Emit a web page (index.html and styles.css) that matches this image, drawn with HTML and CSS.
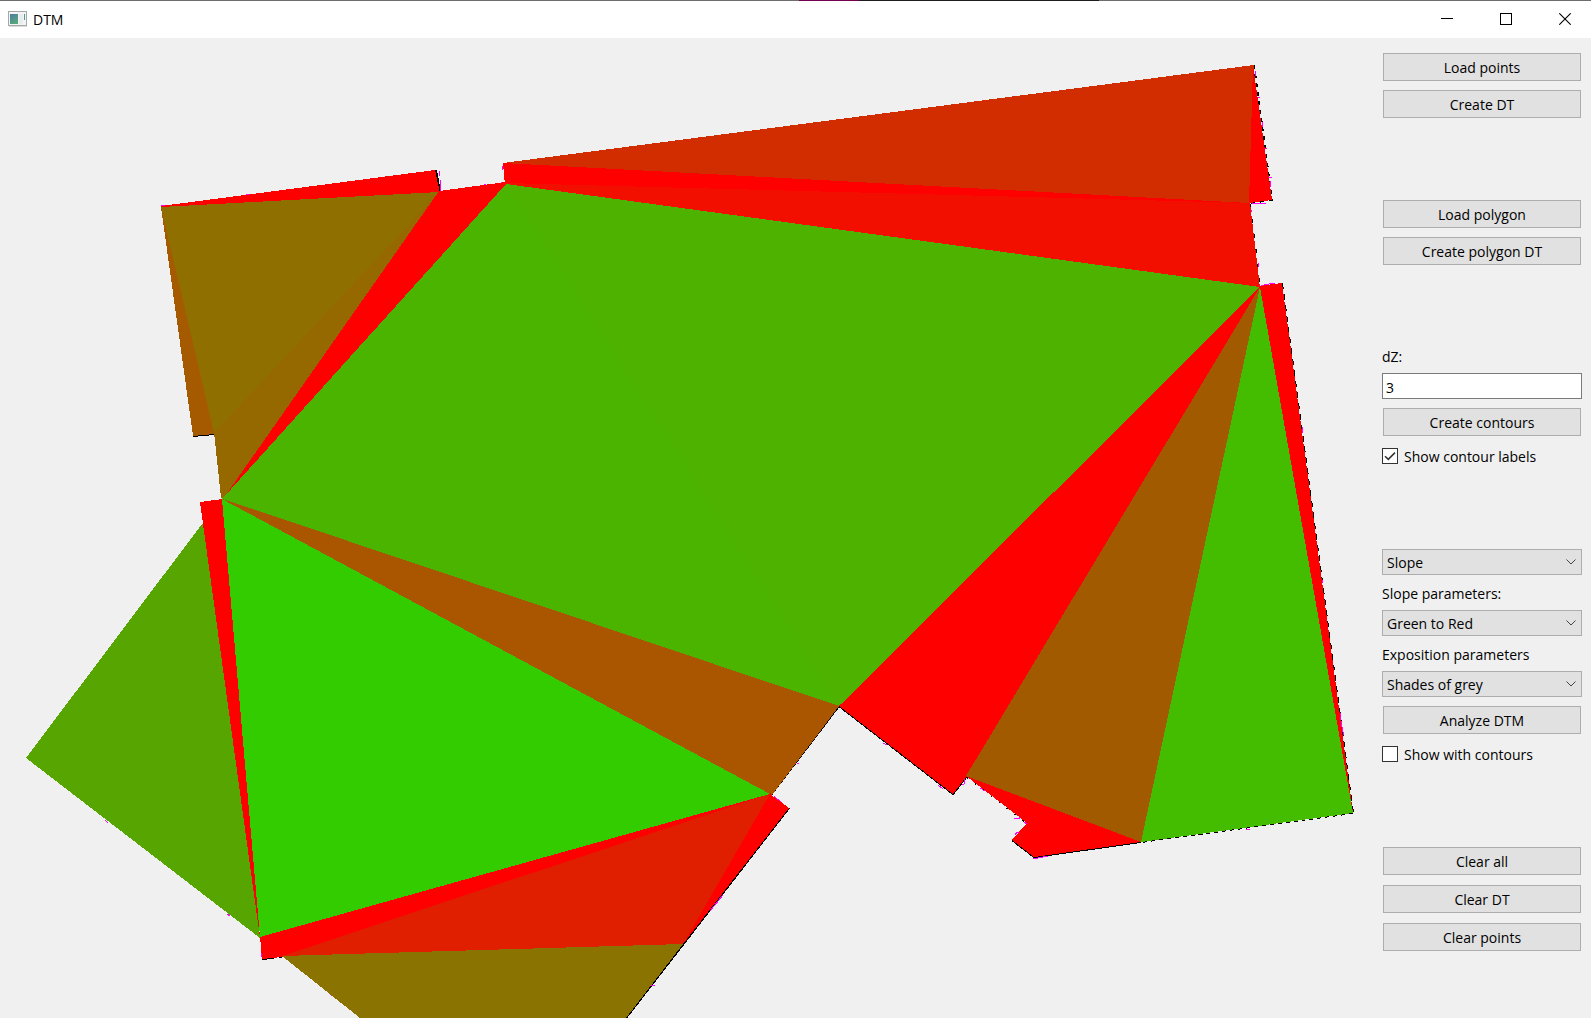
FILE: index.html
```html
<!DOCTYPE html>
<html lang="en">
<head>
<meta charset="utf-8">
<title>DTM</title>
<link rel="stylesheet" href="styles.css">
</head>
<body>
<div class="window">
  <header class="titlebar">
    <svg class="app-icon" width="19" height="16" viewBox="0 0 19 16" aria-hidden="true">
      <defs>
        <linearGradient id="pane" x1="0" y1="0" x2="0.6" y2="1">
          <stop offset="0" stop-color="#4a7ba6"/>
          <stop offset="1" stop-color="#57a878"/>
        </linearGradient>
      </defs>
      <rect x="0.5" y="0.5" width="18" height="14" fill="#f4f4f4" stroke="#a3a8ab"/>
      <rect x="2" y="3" width="8" height="10" fill="url(#pane)"/>
      <rect x="11" y="3" width="4" height="10" fill="#e9ecee"/>
      <rect x="16" y="3" width="1" height="6" fill="#4f9a92"/>
      <rect x="1" y="15" width="18" height="1" fill="#dcdcdc"/>
    </svg>
    <h1 class="title">DTM</h1>
    <div class="window-controls">
      <button type="button" class="window-button" aria-label="Minimize">
        <svg width="12" height="12" viewBox="0 0 12 12"><path d="M0 5.5H12" stroke="#000" fill="none"/></svg>
      </button>
      <button type="button" class="window-button" aria-label="Maximize">
        <svg width="12" height="12" viewBox="0 0 12 12"><rect x="0.5" y="0.5" width="11" height="11" stroke="#000" fill="none"/></svg>
      </button>
      <button type="button" class="window-button" aria-label="Close">
        <svg width="12" height="12" viewBox="0 0 12 12"><path d="M0.3 0.3L11.7 11.7M11.7 0.3L0.3 11.7" stroke="#000" stroke-width="1.1" fill="none"/></svg>
      </button>
    </div>
  </header>

  <main class="content">
    <svg class="terrain" viewBox="0 38 1374 980" preserveAspectRatio="xMinYMin meet" role="img" aria-label="Terrain slope">
      <g class="outline">
        <path d="M436 170L440 192"/>
        <path d="M193 436L214 434"/>
        <path d="M1254 65L1272 200L1250 203" stroke-dasharray="4 5"/>
        <path d="M1250 204L1260 286" stroke-dasharray="4 11"/>
        <path d="M1282 283L1353 813" stroke-dasharray="6 5"/>
        <path d="M1353 813L1141 842" stroke-dasharray="4 4"/>
        <path d="M1141 842L1034 857L1012 840"/>
        <path d="M967 776L953 794L839 706L771 795"/>
        <path d="M967 777L1027 823" stroke-dasharray="2 8"/>
        <path d="M789 808L626 1018"/>
        <path d="M262 959L282 957" stroke-dasharray="12 5"/>
      </g>
      <g class="marks">
        <path d="M161 205.500H173M246 194.500H249M439.500 171V176M440.500 180V191M502.500 166V170M484 184.500H486M501 182.500H502"/>
        <path d="M1255.500 71V76M1258 97.500H1260M1262.500 122V127M1265 148.500H1267M1269 177.500H1272M1270.500 181V187M1252 203.500H1266M1251.500 210V212M1258.500 263V267M1261 285.500L1275 283"/>
        <path d="M1302.500 427V433M1322.500 580V583M1340.500 713V718L1343.500 735M1246 829.500H1250"/>
        <path d="M883 743L887 745M938 785L943 789M962 784Q966 785 964 779M980 788L985 791M797 763H799M774 796L785 806"/>
        <path d="M1014 818Q1018 820 1021 817M1024 822L1027 824M1015 835Q1016 832 1019 833M1033 859L1048 856M723 895L710 911M651 985H655"/>
        <path d="M105 820L108 823M227 914L230 916M260 938V941M261.500 952V957M331 995H334"/>
      </g>
      <g class="facets">
        <path fill="#ff0000" d="M161 206L435 170L440 193L161 208Z"/>
        <path fill="#a55a00" d="M161 207L193 436L214 434L216 430L163 207Z"/>
        <path fill="#966900" d="M214 432L439 191L441 192L223 499L221 498Z"/>
        <path fill="#8f6f00" d="M161 207L439 192L214 433Z"/>
        <path fill="#ff0000" d="M439 191L506 182V187L223 499Z"/>
        <path fill="#ff0000" d="M503 163L1249 203L505 186Z"/>
        <path fill="#f30f00" d="M505 183L1250 203L1260 288L506 187Z"/>
        <path fill="#d22d00" d="M503 163L1254 65L1249 203Z"/>
        <path fill="#ff0000" d="M1253 65L1272 200L1249 203Z"/>
        <path fill="#4bb400" d="M506 184L839 706L222 499Z"/>
        <path fill="#4db200" d="M506 184L1260 287L839 707Z"/>
        <path fill="#ff0000" d="M1260 287L967 776L953 794L839 706Z"/>
        <path fill="#ff0000" d="M1259 286L1282 283L1353 813L1351 813Z"/>
        <path fill="#a25a00" d="M1260 287L1141 842L966 776Z"/>
        <path fill="#44bc00" d="M1260 287L1353 813L1141 842Z"/>
        <path fill="#ff0000" d="M966 776L1141 842L1034 857L1012 840L1027 823Z"/>
        <path fill="#57a500" d="M202 524L26 758L260 938L206 524Z"/>
        <path fill="#ff0000" d="M200 502L223 499L260 938Z"/>
        <path fill="#aa5500" d="M223 499L839 706L772 795L768 795L223 502Z"/>
        <path fill="#ff0000" d="M260 936L772 793L282 957L262 959Z"/>
        <path fill="#33cc00" d="M222 499L770 794L260 937Z"/>
        <path fill="#ff0000" d="M770 794L789 808L683 944Z"/>
        <path fill="#e01f00" d="M770 794L683 944L282 956Z"/>
        <path fill="#8a7300" d="M282 956L683 944L626 1018H360Z"/>
      </g>
    </svg>

    <form class="sidebar">
      <div class="group">
        <button type="button" class="button">Load points</button>
        <button type="button" class="button">Create DT</button>
      </div>

      <div class="group">
        <button type="button" class="button">Load polygon</button>
        <button type="button" class="button">Create polygon DT</button>
      </div>

      <div class="group">
        <div class="field">
          <label class="label" for="dz">dZ:</label>
          <input class="textbox" id="dz" type="text" value="3">
        </div>
        <button type="button" class="button">Create contours</button>
        <label class="check">
          <span class="check-mark">
            <input type="checkbox" class="checkbox" checked>
            <svg class="tick" width="16" height="16" viewBox="0 0 16 16" aria-hidden="true"><path d="M3 8.200L6.300 11.400L13 4.600" fill="none" stroke="#333" stroke-width="1.500"/></svg>
          </span>
          <span class="check-text">Show contour labels</span>
        </label>
      </div>

      <div class="group">
        <div class="select">
          <select class="dropdown" aria-label="Analysis type"><option>Slope</option><option>Exposition</option></select>
          <svg class="chevron" width="10" height="6" viewBox="0 0 10 6" aria-hidden="true"><path d="M0.500 0.500L5 5L9.500 0.500" fill="none" stroke="#444"/></svg>
        </div>
        <div class="field">
          <label class="label" for="slope">Slope parameters:</label>
          <div class="select">
            <select class="dropdown" id="slope"><option>Green to Red</option></select>
            <svg class="chevron" width="10" height="6" viewBox="0 0 10 6" aria-hidden="true"><path d="M0.500 0.500L5 5L9.500 0.500" fill="none" stroke="#444"/></svg>
          </div>
        </div>
        <div class="field">
          <label class="label" for="exposition">Exposition parameters</label>
          <div class="select">
            <select class="dropdown" id="exposition"><option>Shades of grey</option></select>
            <svg class="chevron" width="10" height="6" viewBox="0 0 10 6" aria-hidden="true"><path d="M0.500 0.500L5 5L9.500 0.500" fill="none" stroke="#444"/></svg>
          </div>
        </div>
        <button type="button" class="button">Analyze DTM</button>
        <label class="check">
          <span class="check-mark">
            <input type="checkbox" class="checkbox">
            <svg class="tick" width="16" height="16" viewBox="0 0 16 16" aria-hidden="true"><path d="M3 8.200L6.300 11.400L13 4.600" fill="none" stroke="#333" stroke-width="1.500"/></svg>
          </span>
          <span class="check-text">Show with contours</span>
        </label>
      </div>

      <div class="group group-clear">
        <button type="button" class="button">Clear all</button>
        <button type="button" class="button">Clear DT</button>
        <button type="button" class="button">Clear points</button>
      </div>
    </form>
  </main>
</div>
</body>
</html>
```
FILE: styles.css
```css
* {
  box-sizing: border-box;
}

body {
  margin: 0;
  background: #f0f0f0;
  color: #000;
  font: 14px/20px "Open Sans", "Noto Sans", sans-serif;
}

.window {
  display: flex;
  flex-direction: column;
  height: 100vh;
}

.titlebar {
  display: flex;
  flex: none;
  align-items: center;
  gap: 6px;
  height: 38px;
  padding: 0 0 0 8px;
  background:
    linear-gradient(to right, #6d6d6d 50.2%, #750050 50.2% 54%, #1c1c1c 54% 69.1%, #6d6d6d 69.1%) top / 100% 1px no-repeat,
    #fff;
}

.title {
  margin: 0;
  padding-top: 2px;
  font-size: 14px;
  font-weight: 400;
}

.window-controls {
  display: flex;
  gap: 7px;
  margin-left: auto;
}

.window-button {
  display: grid;
  place-items: center;
  width: 52px;
  height: 36px;
  padding: 0;
  border: 0;
  background: none;
}

.content {
  display: flex;
  flex: 1;
  min-height: 0;
}

.terrain {
  flex: 1;
  min-width: 0;
  height: 100%;
  shape-rendering: crispEdges;
}

.outline {
  fill: none;
  stroke: #000;
  stroke-width: 2;
}

.marks {
  fill: none;
  stroke: #f0f;
  stroke-width: 1;
}

.sidebar {
  display: flex;
  flex: none;
  flex-direction: column;
  gap: 82px;
  width: 217px;
  padding: 15px 9px 0 8px;
}

.group {
  display: flex;
  flex-direction: column;
  gap: 9px;
}

.group-clear {
  gap: 10px;
}

.field {
  display: flex;
  flex-direction: column;
  gap: 6px;
}

.button {
  height: 28px;
  margin: 0 1px;
  padding: 2px 0 0;
  border: 1px solid #adadad;
  background: #e1e1e1;
  color: inherit;
  font: inherit;
}

.textbox {
  width: 100%;
  height: 26px;
  padding: 2px 3px 0;
  border: 1px solid #7a7a7a;
  border-radius: 0;
  background: #fff;
  color: inherit;
  font: inherit;
}

.select {
  position: relative;
}

.dropdown {
  display: block;
  width: 100%;
  height: 26px;
  padding: 1px 24px 0 4px;
  border: 1px solid #adadad;
  border-radius: 0;
  background: #e1e1e1;
  color: inherit;
  font: inherit;
  appearance: none;
}

.chevron {
  position: absolute;
  top: 10px;
  right: 6px;
  pointer-events: none;
}

.check {
  display: flex;
  align-items: center;
  gap: 6px;
  height: 22px;
}

.check-mark {
  display: grid;
}

.check-text {
  padding-top: 2px;
}

.checkbox,
.tick {
  grid-area: 1 / 1;
}

.checkbox {
  width: 16px;
  height: 16px;
  margin: 0;
  border: 1px solid #333;
  background: #fff;
  appearance: none;
}

.tick {
  visibility: hidden;
  pointer-events: none;
}

.checkbox:checked + .tick {
  visibility: visible;
}
```
